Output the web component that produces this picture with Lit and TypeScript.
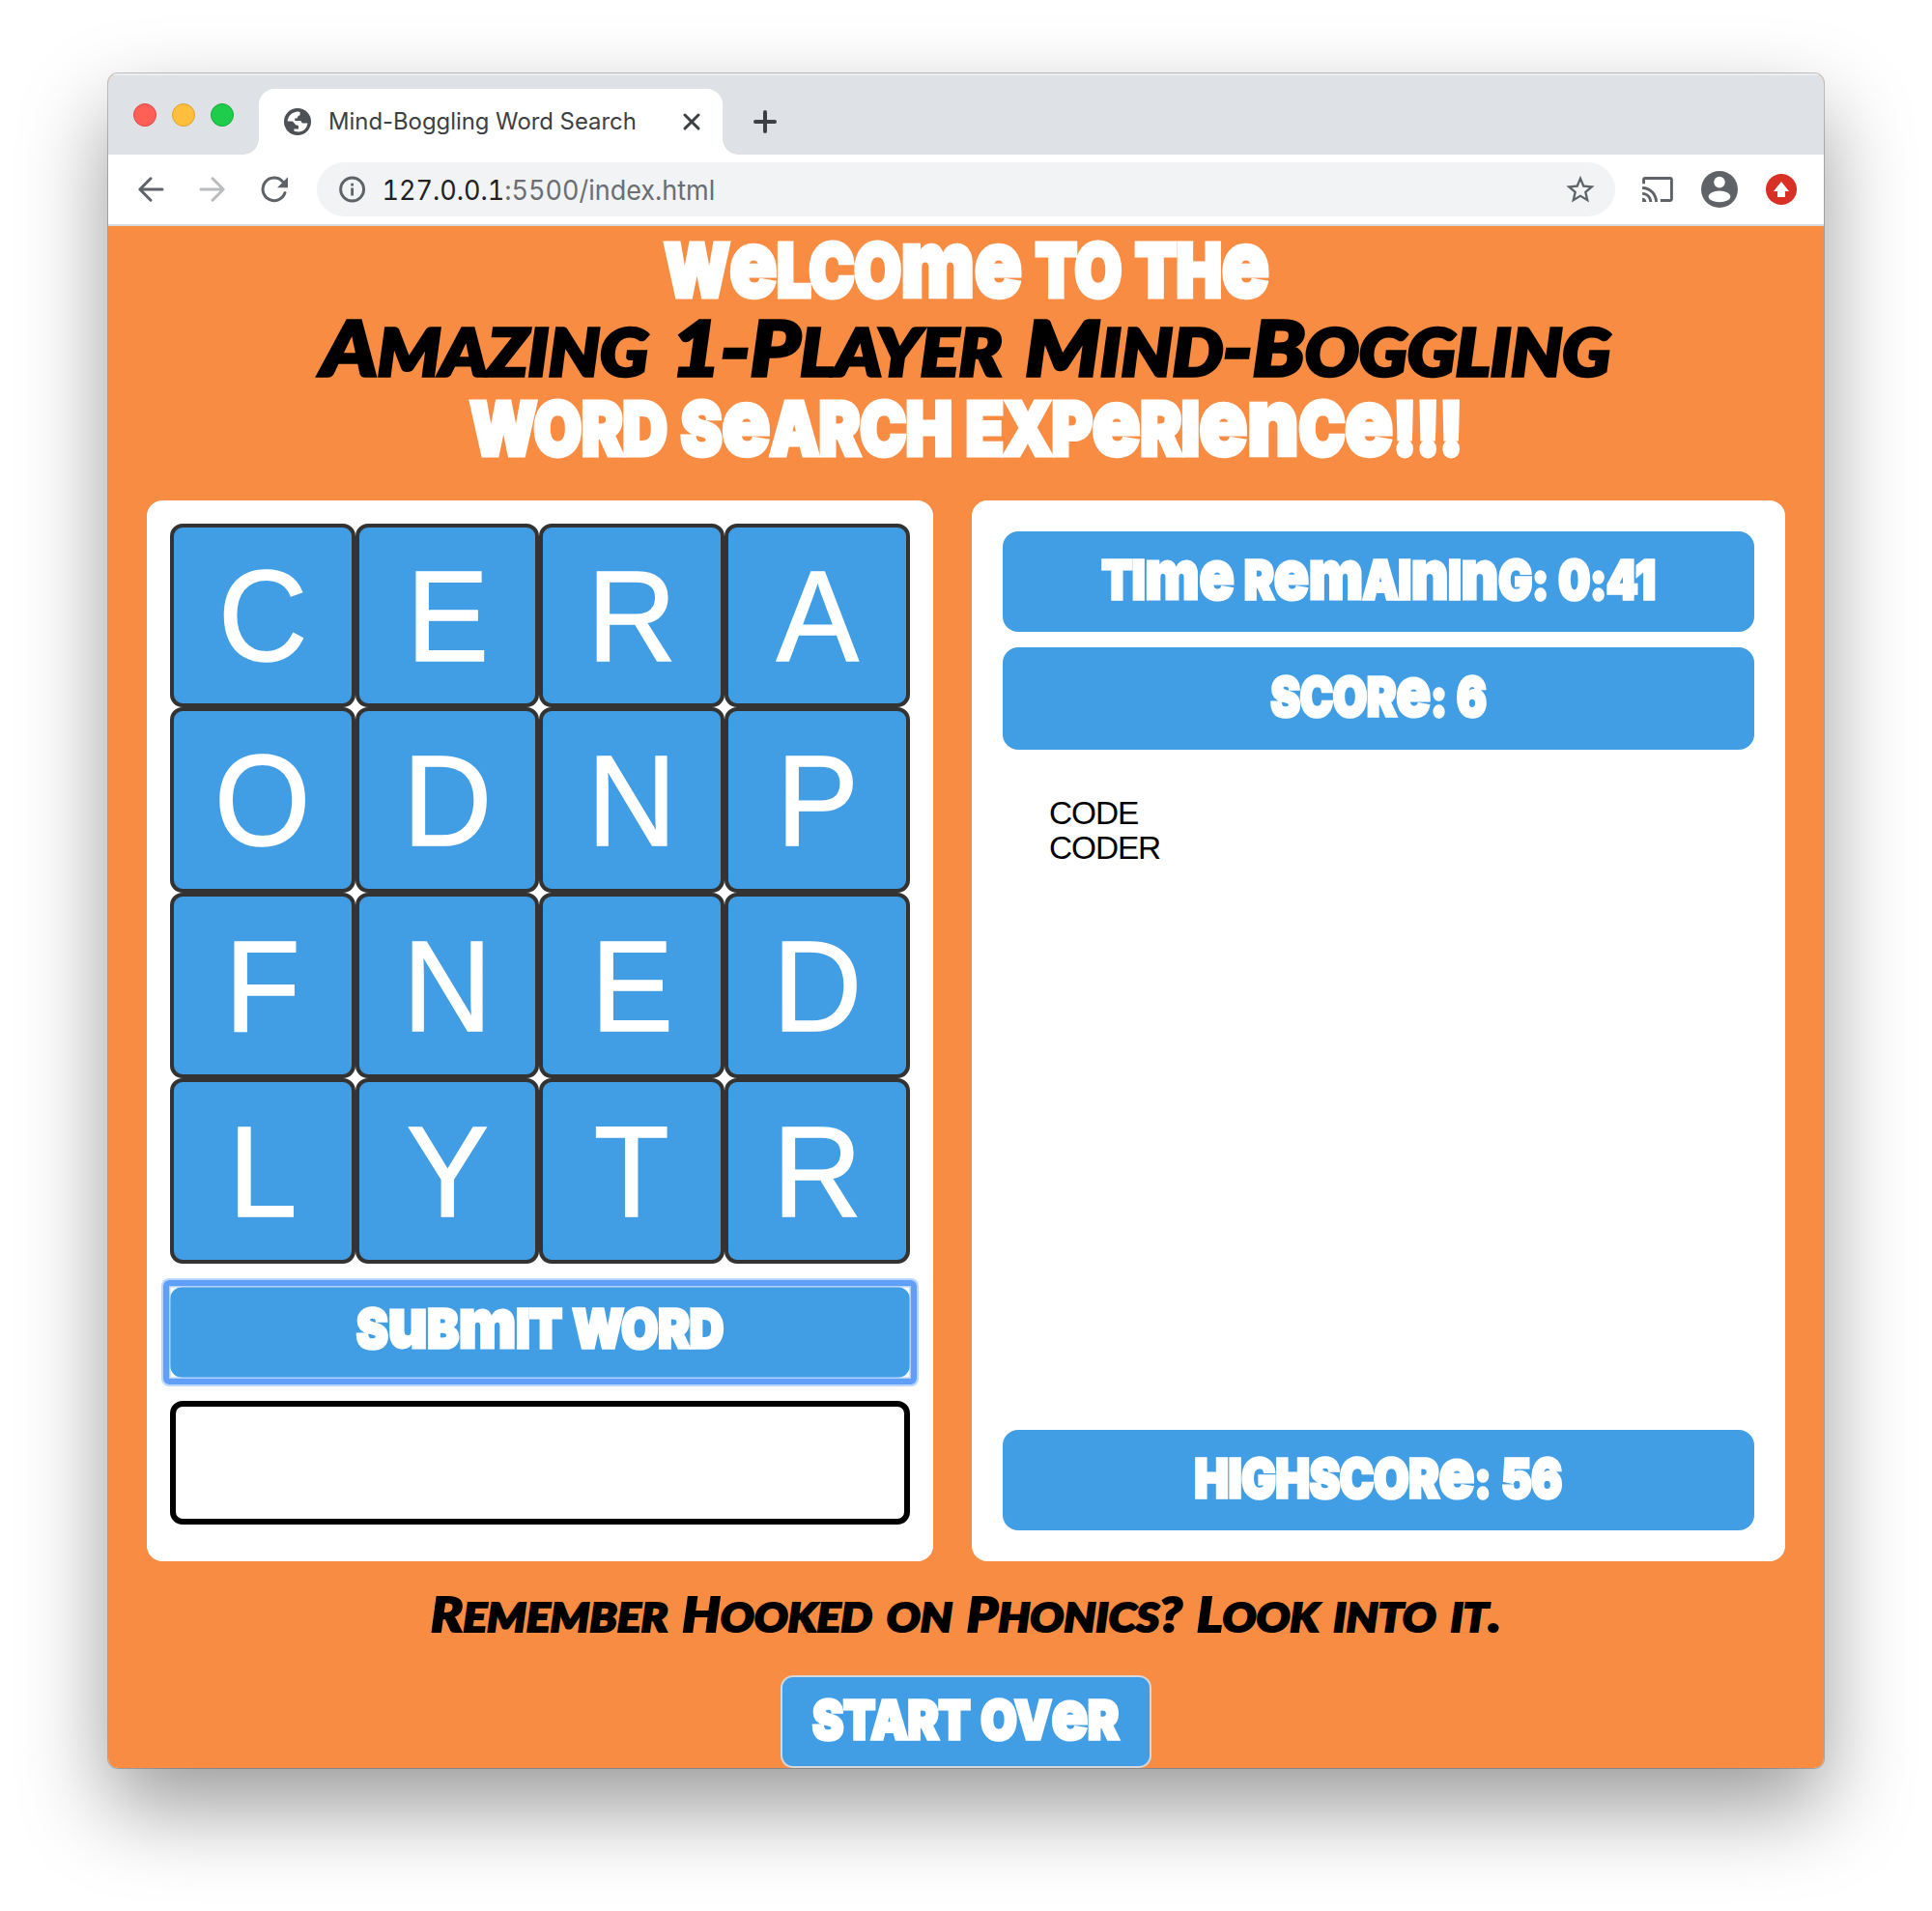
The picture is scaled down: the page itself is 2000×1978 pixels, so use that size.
import { LitElement, html, css, svg } from "lit";
import { customElement, property } from "lit/decorators.js";

/* Text set in a given style and condensed or widened to an exact width. */
@customElement("fit-text")
class FitText extends LitElement {
  @property({ type: Number }) width = 100;
  @property() text = "";
  @property() look = "plain";

  static styles = css`
    :host { display: flex; justify-content: center; align-items: center; flex: none; }
    .t { flex: none; white-space: pre; line-height: 1; }
    .plain { font-family: Inter, sans-serif; }
    .address { font-family: Inter, sans-serif; font-feature-settings: "tnum" 1, "calt" 0; }
    .toon { font-family: Inter, "Open Sans", sans-serif; font-weight: 900; letter-spacing: -0.005em; word-spacing: 0.03em;
      -webkit-text-stroke: 0.065em currentColor; }
    .toon span { line-height: 0; }
    .up { text-transform: uppercase; }
    .round { font-size: 1.29em; -webkit-text-stroke-width: 0.045em; }
    .marker { font-family: Lato, sans-serif; font-weight: 900; font-style: italic; word-spacing: 0.06em;
      -webkit-text-stroke: 0.045em currentColor; stroke-linejoin: round; }
    .marker .small { font-size: 0.84em; text-transform: uppercase; line-height: 0; }
    .dim { color: #6b6e72; }
  `;

  updated() {
    const el = this.renderRoot.querySelector(".t") as HTMLElement;
    el.style.transform = `scaleX(${this.width / el.offsetWidth})`;
  }

  private parts() {
    if (this.look === "toon") {
      return this.text.split(/([emnu]+)/).filter(Boolean)
        .map((p) => html`<span class=${/^[emnu]/.test(p) ? "round" : "up"}>${p}</span>`);
    }
    if (this.look === "marker") {
      return this.text.split(/([a-z]+)/).filter(Boolean)
        .map((p) => (/^[a-z]/.test(p) ? html`<span class="small">${p}</span>` : p));
    }
    const cut = this.text.indexOf(":");
    return cut < 0 ? this.text : html`${this.text.slice(0, cut)}<span class="dim">${this.text.slice(cut)}</span>`;
  }

  render() {
    return html`<style>:host { width: ${this.width}px; }</style><div class="t ${this.look}">${this.parts()}</div>`;
  }
}

const globe = svg`<circle cx="14" cy="14" r="14" fill="#4d5156"/>
  <path fill="#fff" d="M3.6 13.6C4 8.2 8.6 3.8 14.4 3.6L16.6 3.9V6.4C16.6 7.6 15.4 7.4 14.6 8.2C13.8 9 14.2 10 13.2 10.6H11.2V13H16.8C18 13 18 15.4 19.2 15.4H24.4C24 20.4 20 24.4 15 24.4L10.4 23.8V21.6H15V18.8C15 17.4 13.6 17.8 12.6 17.4C11.4 16.9 10.8 15.4 9.6 14.2C8.6 13.4 6 13.6 3.6 13.6Z"/>`;

@customElement("browser-bar")
class BrowserBar extends LitElement {
  static styles = css`
    :host { display: block; }
    svg { display: block; flex: none; }
    .strip { height: 84px; background: #dee1e6; display: flex; align-items: flex-end; box-shadow: inset 0 2px 0 #eceef0; }
    .lights { display: flex; gap: 16px; width: 156px; padding: 0 0 29px 26px; box-sizing: border-box; }
    .light { width: 24px; height: 24px; border-radius: 50%; box-sizing: border-box; }
    .red { background: #ff5f57; border: 1px solid #e2453d; }
    .amber { background: #ffbf3d; border: 1px solid #e0a02f; }
    .green { background: #1fcd4d; border: 1px solid #14ab35; }
    .tab { position: relative; width: 480px; height: 68px; box-sizing: border-box; background: #fff; border-radius: 16px 16px 0 0;
      display: flex; align-items: center; padding: 0 23px 0 26px; }
    .tab::before, .tab::after { content: ""; position: absolute; bottom: 0; width: 16px; height: 16px; }
    .tab::before { left: -16px; background: radial-gradient(circle at 0 0, transparent 15.5px, #fff 16px); }
    .tab::after { right: -16px; background: radial-gradient(circle at 100% 0, transparent 15.5px, #fff 16px); }
    .title { font-size: 24px; color: #3c4043; margin-left: 18px; }
    .close { margin-left: auto; }
    .plus { margin: 0 0 22px 32px; }
    .tools { height: 72px; background: #fff; border-bottom: 2px solid #d9dbde; display: flex; align-items: center; padding: 0 28px 0 30px; }
    .nav { display: flex; gap: 36px; margin-right: 30px; }
    .omni { flex: 1; height: 56px; border-radius: 28px; background: #f1f3f4; display: flex; align-items: center; padding: 0 21px 0 23px; }
    .url { font-size: 28px; color: #202124; margin-left: 16px; padding-top: 1px; }
    .star { margin-left: auto; }
    .cast { margin: 0 29px 0 28px; }
    .badge { margin-left: 29px; }
  `;

  render() {
    return html`
      <div class="strip">
        <div class="lights">
          <div class="light red"></div><div class="light amber"></div><div class="light green"></div>
        </div>
        <div class="tab">
          <svg width="28" height="28" viewBox="0 0 28 28">${globe}</svg>
          <fit-text class="title" .width=${319} text="Mind-Boggling Word Search"></fit-text>
          <svg class="close" width="18" height="18" viewBox="0 0 18 18"><path d="M2 2L16 16M16 2L2 16" stroke="#3c4043" stroke-width="3" stroke-linecap="round"/></svg>
        </div>
        <svg class="plus" width="24" height="24" viewBox="0 0 24 24"><path d="M12 2V22M2 12H22" stroke="#3c4043" stroke-width="4" stroke-linecap="round"/></svg>
      </div>
      <div class="tools">
        <div class="nav">
          <svg width="28" height="28" viewBox="0 0 28 28"><path d="M26 14H3M14 2.8L2.8 14L14 25.2" fill="none" stroke="#5f6368" stroke-width="3" stroke-linecap="round" stroke-linejoin="round"/></svg>
          <svg width="28" height="28" viewBox="0 0 28 28"><path d="M2 14H25M14 2.8L25.2 14L14 25.2" fill="none" stroke="#babcbe" stroke-width="3" stroke-linecap="round" stroke-linejoin="round"/></svg>
          <svg width="28" height="28" viewBox="0 0 28 28"><path d="M25 17.6A11.8 11.8 0 1 1 22.6 5.9" fill="none" stroke="#5f6368" stroke-width="3" stroke-linecap="round"/><path d="M17 12.2L28 1.2V12.2Z" fill="#5f6368"/></svg>
        </div>
        <div class="omni">
          <svg width="28" height="28" viewBox="0 0 28 28"><circle cx="13.6" cy="14" r="12" fill="none" stroke="#5f6368" stroke-width="2.9"/><path d="M12.2 7.7H15V10.4H12.2ZM12.2 12.6H15V20.6H12.2Z" fill="#5f6368"/></svg>
          <fit-text class="url" look="address" .width=${345} text="127.0.0.1:5500/index.html"></fit-text>
          <svg class="star" width="30" height="30" viewBox="1.7 1.4 20.6 20.6"><path fill="#5f6368" d="M22 9.24l-7.19-.62L12 2 9.19 8.63 2 9.24l5.46 4.73L5.82 21 12 17.27 18.18 21l-1.63-7.03L22 9.24zM12 15.4l-3.76 2.27 1-4.28-3.32-2.88 4.38-.38L12 6.1l1.71 4.04 4.38.38-3.32 2.88 1 4.28L12 15.4z"/></svg>
        </div>
        <svg class="cast" width="32" height="26" viewBox="1 3 22 18"><path fill="#5f6368" d="M21 3H3c-1.1 0-2 .9-2 2v3h2V5h18v14h-7v2h7c1.1 0 2-.9 2-2V5c0-1.1-.9-2-2-2zM1 18v3h3c0-1.66-1.34-3-3-3zm0-4v2c2.76 0 5 2.24 5 5h2c0-3.87-3.13-7-7-7zm0-4v2c4.97 0 9 4.03 9 9h2c0-6.08-4.93-11-11-11z"/></svg>
        <svg width="38" height="38" viewBox="0 0 38 38"><circle cx="19" cy="19" r="19" fill="#5f6368"/><circle cx="19" cy="11.6" r="5.8" fill="#fff"/><ellipse cx="19" cy="26.4" rx="11.4" ry="5.8" fill="#fff"/></svg>
        <svg class="badge" width="32" height="32" viewBox="0 0 32 32"><circle cx="16" cy="16" r="16" fill="#d93025"/><path d="M16 8L24 18H20V24H12V18H8Z" fill="#fff"/></svg>
      </div>
    `;
  }
}

@customElement("app-root")
class AppRoot extends LitElement {
  private letters = "CERAODNPFNEDLYTR".split("");
  private words = ["CODE", "CODER"];

  static styles = css`
    :host { display: block; box-sizing: border-box; width: 2000px; height: 1978px; padding: 76px 112px 0; background: #fff; overflow: hidden; }
    .window { height: 1754px; border-radius: 10px; overflow: hidden; background: #f78c42; }
    .frame { border-radius: 10px; box-shadow: 0 0 0 1px rgba(0,0,0,.22), 0 40px 90px rgba(0,0,0,.4); }
    .page { display: flex; flex-direction: column; align-items: center; padding-top: 4px; color: #fff; }
    .head { display: flex; flex-direction: column; align-items: center; margin-bottom: 32px; }
    .h1 { height: 83px; font-size: 75px; }
    .h2 { height: 74px; padding-bottom: 6px; font-size: 79px; color: #000; }
    .h3 { height: 85px; font-size: 75px; }
    .panels { display: grid; grid-template-columns: 814px 842px; gap: 40px; height: 1098px; }
    .panel { background: #fff; border-radius: 16px; box-sizing: border-box; display: flex; flex-direction: column; }
    .board { padding: 24px; }
    .tiles { display: grid; grid-template-columns: 192px 190px 192px 192px; grid-template-rows: 190px 192px 192px 192px; }
    .tile { box-sizing: border-box; border: 4px solid #333; border-radius: 13px; background: #419ee5; display: flex; align-items: center; justify-content: center;
      font: 133px/1 "Liberation Sans", Arial, sans-serif; padding-top: 2px; -webkit-text-stroke: 1.5px #fff; }
    .glyph { transform: scaleX(.96); }
    .btn { position: relative; background: #419ee5; color: #fff; display: flex; align-items: center; justify-content: center; box-sizing: border-box; font-size: 55px; }
    .submit { height: 94px; margin: 24px 0; border-radius: 13px; padding-bottom: 7px; }
    .submit::after { content: ""; position: absolute; inset: -7px; border: 6px solid #5f9ff8; border-radius: 6px;
      box-shadow: 0 0 0 2px #bad6fb, inset 0 0 0 1.5px #b4d3fa; }
    .entry { height: 128px; box-sizing: border-box; border: 6px solid #000; border-radius: 13px; }
    .stats { padding: 32px; gap: 16px; }
    .stat { height: 104px; border-radius: 16px; padding-bottom: 3px; }
    .tall { height: 106px; }
    .words { flex: 1; margin: 0; padding: 32px 48px; list-style: none; color: #000; font: 33.4px/36px "Liberation Sans", Arial, sans-serif; letter-spacing: -1.1px; }
    .quip { height: 71px; padding-top: 1px; margin: 18px 0 28px; font-size: 49px; color: #000; }
    .again { width: 384px; height: 96px; border: 2px solid #d5d7d9; border-radius: 13px; padding-bottom: 3px; }
  `;

  render() {
    return html`
      <div class="frame"><div class="window">
        <browser-bar></browser-bar>
        <div class="page">
          <div class="head">
            <fit-text class="h1" look="toon" .width=${626} text="Welcome to the"></fit-text>
            <fit-text class="h2" look="marker" .width=${1334} text="Amazing 1-Player Mind-Boggling"></fit-text>
            <fit-text class="h3" look="toon" .width=${1028} text="Word Search Experience!!!"></fit-text>
          </div>
          <div class="panels">
            <div class="panel board">
              <div class="tiles">
                ${this.letters.map((l) => html`<div class="tile"><span class="glyph">${l}</span></div>`)}
              </div>
              <div class="btn submit"><fit-text look="toon" .width=${380} text="Submit Word"></fit-text></div>
              <div class="entry"></div>
            </div>
            <div class="panel stats">
              <div class="btn stat"><fit-text look="toon" .width=${573} text="Time Remaining: 0:41"></fit-text></div>
              <div class="btn stat tall"><fit-text look="toon" .width=${223} text="Score: 6"></fit-text></div>
              <ul class="words">${this.words.map((w) => html`<li>${w}</li>`)}</ul>
              <div class="btn stat"><fit-text look="toon" .width=${380} text="Highscore: 56"></fit-text></div>
            </div>
          </div>
          <fit-text class="quip" look="marker" .width=${1108} text="Remember Hooked on Phonics? Look into it."></fit-text>
          <div class="btn again"><fit-text look="toon" .width=${317} text="Start Over"></fit-text></div>
        </div>
      </div></div>
    `;
  }
}
